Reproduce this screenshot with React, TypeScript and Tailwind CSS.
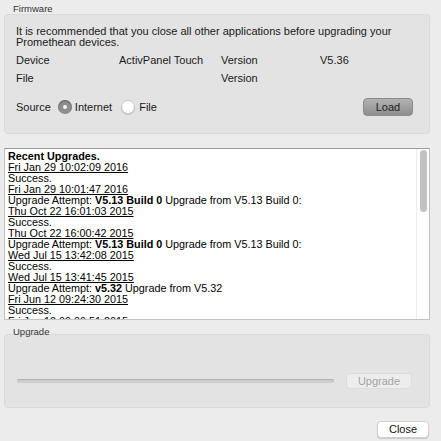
const log: { text: React.ReactNode; date?: boolean; bold?: boolean }[] = [
  { text: "Recent Upgrades.", bold: true },
  { text: "Fri Jan 29 10:02:09 2016", date: true },
  { text: "Success." },
  { text: "Fri Jan 29 10:01:47 2016", date: true },
  {
    text: (
      <>
        Upgrade Attempt: <b>V5.13 Build 0</b> Upgrade from V5.13 Build 0:
      </>
    ),
  },
  { text: "Thu Oct 22 16:01:03 2015", date: true },
  { text: "Success." },
  { text: "Thu Oct 22 16:00:42 2015", date: true },
  {
    text: (
      <>
        Upgrade Attempt: <b>V5.13 Build 0</b> Upgrade from V5.13 Build 0:
      </>
    ),
  },
  { text: "Wed Jul 15 13:42:08 2015", date: true },
  { text: "Success." },
  { text: "Wed Jul 15 13:41:45 2015", date: true },
  {
    text: (
      <>
        Upgrade Attempt: <b>v5.32</b> Upgrade from V5.32
      </>
    ),
  },
  { text: "Fri Jun 12 09:24:30 2015", date: true },
  { text: "Success." },
  { text: "Fri Jun 12 09:09:51 2015", date: true },
];

function Radio({ checked }: { checked?: boolean }) {
  if (checked) {
    return (
      <span className="w-[14px] h-[14px] rounded-full bg-[#8e8e8e] shadow-[inset_0_1px_2px_rgba(0,0,0,0.35)] flex items-center justify-center">
        <span className="w-[4px] h-[4px] rounded-full bg-[#f4f4f4]" />
      </span>
    );
  }
  return (
    <span className="block w-[14px] h-[14px] rounded-full bg-white border border-[#c4c4c4] shadow-[0_1px_1px_rgba(0,0,0,0.12)]" />
  );
}

export default function App() {
  return (
    <div className="w-[441px] h-[441px] bg-[#ececec] font-['Liberation_Sans',Arial,sans-serif] text-[#1a1a1a] px-[4px] pt-[3px] overflow-hidden">
      <div className="pl-[9px] text-[9.5px] leading-[11px] text-[#333]">Firmware</div>
      <div className="w-[426px] h-[120px] rounded-[4px] bg-[#e3e3e3] border border-[#dadada] pl-[11px] pt-[11px] text-[11px]">
        <p className="leading-[11px] w-[400px]">
          It is recommended that you close all other applications before upgrading your Promethean devices.
        </p>
        <div className="grid grid-cols-[103px_102px_99px_1fr] leading-[12px] mt-[6px] gap-y-[6px]">
          <span>Device</span>
          <span>ActivPanel Touch</span>
          <span>Version</span>
          <span>V5.36</span>
          <span>File</span>
          <span />
          <span>Version</span>
          <span />
        </div>
        <div className="flex items-center h-[18px] mt-[14px] pr-[16px]">
          <span>Source</span>
          <span className="ml-[7px]">
            <Radio checked />
          </span>
          <span className="ml-[3px]">Internet</span>
          <span className="ml-[9px]">
            <Radio />
          </span>
          <span className="ml-[4px]">File</span>
          <button className="ml-auto w-[50px] h-[18px] rounded-[4px] bg-gradient-to-b from-[#b2b2b2] to-[#8f8f8f] border border-[#8a8a8a] text-[11px] text-[#222] leading-none">
            Load
          </button>
        </div>
      </div>

      <div className="mt-[14px] w-[426px] h-[172px] bg-white border border-[#c2c2c2] border-t-[#9a9a9a] flex overflow-hidden">
        <div className="flex-1 pl-[3px] pt-[2px] text-[10.8px] leading-[11px] text-black overflow-hidden">
          {log.map((l, i) => (
            <div key={i} className={`whitespace-nowrap ${l.date ? "underline underline-offset-[1px]" : ""} ${l.bold ? "font-bold" : ""}`}>
              {l.text}
            </div>
          ))}
        </div>
        <div className="w-[13px] border-l border-[#ededed] flex justify-center pt-[1px]">
          <div className="w-[7px] h-[62px] rounded-full bg-[#c2c2c2]" />
        </div>
      </div>

      <div className="pl-[9px] pt-[6px] h-[14px] text-[9.5px] leading-[11px] text-[#333]">Upgrade</div>
      <div className="w-[426px] h-[74px] rounded-[4px] bg-[#e3e3e3] border border-[#dadada] flex items-center pl-[12px] pr-[17px] pt-[20px]">
        <div className="w-[317px] h-[4px] rounded-full bg-[#cfcfcf] shadow-[inset_0_1px_1px_rgba(0,0,0,0.15)]" />
        <button className="ml-auto w-[66px] h-[16px] rounded-[4px] bg-[#ededed] border border-[#dcdcdc] text-[11px] text-[#a3a3a3] leading-none">
          Upgrade
        </button>
      </div>

      <div className="flex justify-end mt-[13px] pr-[8px]">
        <button className="w-[52px] h-[17px] rounded-[4px] bg-white border border-[#d0d0d0] shadow-[0_1px_1px_rgba(0,0,0,0.15)] text-[11px] text-[#111] leading-none">
          Close
        </button>
      </div>
    </div>
  );
}
